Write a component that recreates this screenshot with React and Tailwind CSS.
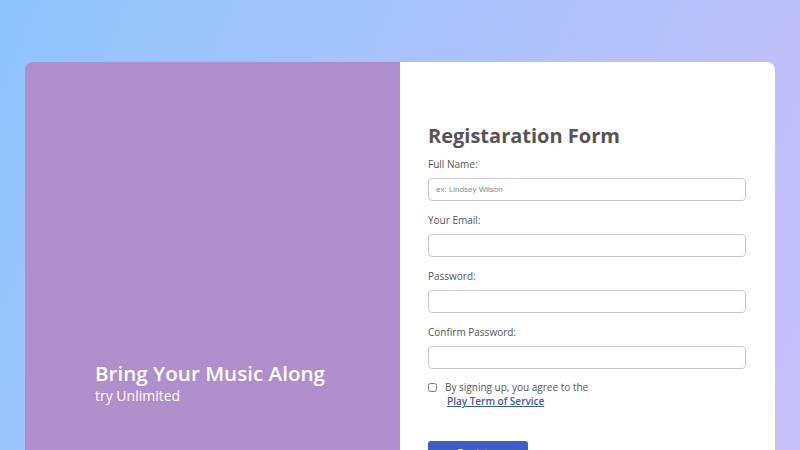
import React from "react";

const Field = ({ label, type = "text", placeholder }) => (
  <div className="mb-[11px]">
    <label className="block text-[10px] leading-[16px] text-[#555] mb-[6px]">{label}</label>
    <input
      type={type}
      placeholder={placeholder}
      className="block w-full h-[23px] rounded-[4px] border border-[#c8c8c8] px-[7px] text-[8px] font-['Liberation_Sans',Arial,sans-serif] placeholder:text-[#8a8a8a] outline-none"
    />
  </div>
);

export default function App() {
  return (
    <div className="h-[450px] overflow-hidden bg-[linear-gradient(112deg,#8ec5fc_0%,#c8bffa_100%)] pt-[62px] px-[25px] font-['Open_Sans',sans-serif]">
      <div className="flex h-[440px] rounded-[8px] overflow-hidden">
        {/* Left panel */}
        <div className="w-1/2 bg-[#af8ecb] flex flex-col justify-end pl-[70px] pb-[96px] text-white">
          <h2 className="text-[20.6px] leading-[26px] font-semibold">Bring Your Music Along</h2>
          <p className="text-[14px] leading-[20px]">try Unlimited</p>
        </div>

        {/* Right panel */}
        <div className="w-1/2 bg-white pt-[60px] pl-[28px] pr-[29px]">
          <h1 className="text-[20px] leading-[28px] font-bold text-[#555] mb-[6px]">Registaration Form</h1>
          <form>
            <Field label="Full Name:" placeholder="ex: Lindsey Wilson" />
            <Field label="Your Email:" type="email" />
            <Field label="Password:" type="password" />
            <Field label="Confirm Password:" type="password" />

            <div className="flex items-start mt-[8px]">
              <input type="checkbox" className="mt-[3px] w-[9px] h-[9px]" />
              <div className="ml-[8px] text-[10px] leading-[14px] text-[#555]">
                <p>By signing up, you agree to the</p>
                <a href="#" className="block ml-[2px] font-semibold text-[#3a5aa8] underline">
                  Play Term of Service
                </a>
              </div>
            </div>

            <button
              type="button"
              className="mt-[33px] w-[100px] h-[24px] leading-[24px] rounded-[3px] bg-[#3b5fc6] text-white text-[11px]"
            >
              Register
            </button>
          </form>
        </div>
      </div>
    </div>
  );
}
